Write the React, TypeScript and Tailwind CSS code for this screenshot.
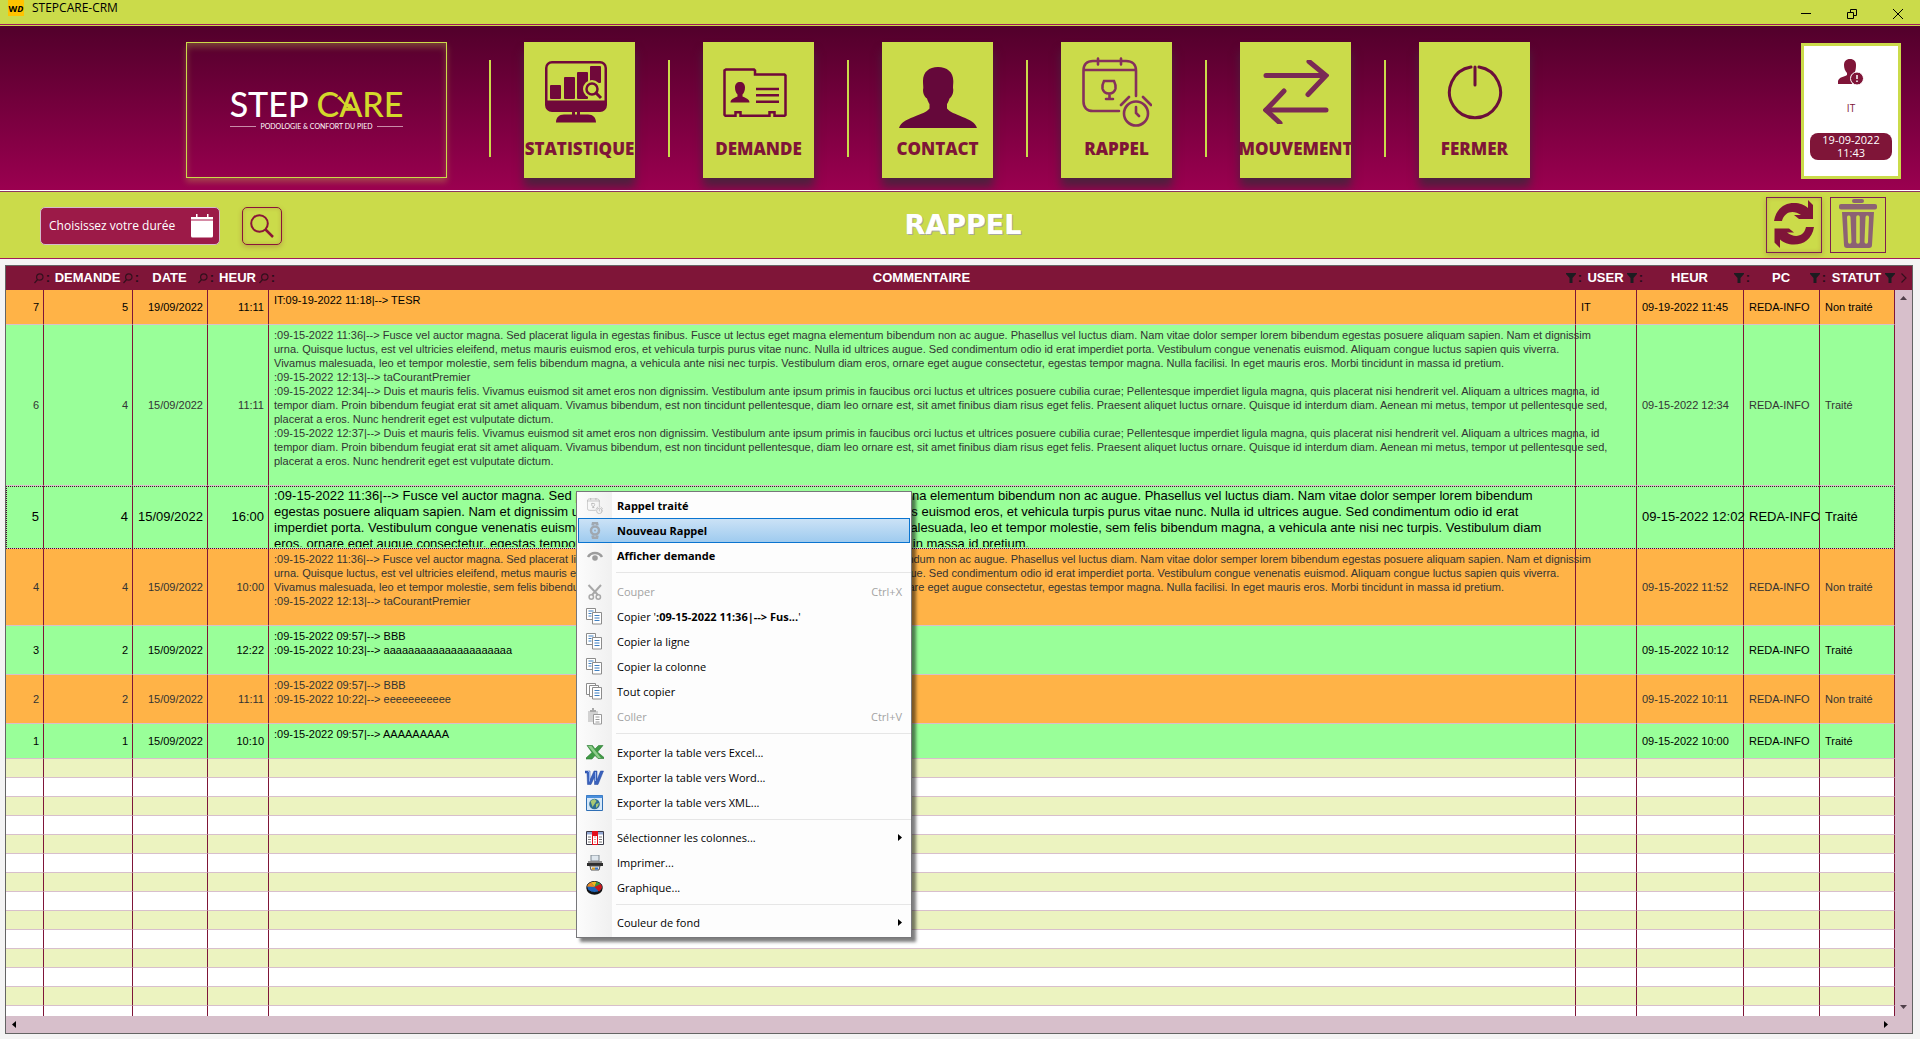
import type { ReactNode } from "react";

/* ---------- header icons ---------- */

const StatIcon = () => (
  <svg width="70" height="62" viewBox="0 0 70 62" fill="#70093a">
    <path fillRule="evenodd" d="M7 0h48a7 7 0 0 1 7 7v37a7 7 0 0 1-7 7H7a7 7 0 0 1-7-7V7a7 7 0 0 1 7-7zm0 2.500a4.500 4.500 0 0 0-4.500 4.500v32.500h57V7a4.500 4.500 0 0 0-4.500-4.500z" />
    <rect x="5" y="24" width="11" height="14" rx="1" />
    <rect x="19" y="16" width="11" height="22" rx="1" />
    <rect x="32" y="11" width="11" height="27" rx="1" />
    <rect x="45" y="5" width="11" height="17" rx="1" />
    <circle cx="47" cy="28" r="9" fill="#cbdb4a" />
    <circle cx="47" cy="28" r="5.500" fill="none" stroke="#70093a" strokeWidth="2.500" />
    <path d="M51 32l5 5" stroke="#70093a" strokeWidth="3" />
    <path d="M27 51h3v4h-3zM32 51h3v4h-3zM11 61.500c0-5 3-8 8-8h24c5 0 8 3 8 8z" />
  </svg>
);

const DemandeIcon = () => (
  <svg width="72" height="49" viewBox="0 0 72 49" fill="none" stroke="#70093a" strokeWidth="2.500">
    <path d="M3 1.500h28l1 1v4h29.500l1 1V47l-1 .8H51.500v-3.500h-5v3.500h-29v-3.500h-5v3.500H2.500l-1-1V2.500z" />
    <path d="M33 21h23M33 27.300h23M33 33.700h23" />
    <path d="M17 14c-3 0-5 2-5 5.500 0 3 1 5.500 2.500 7v2c-3 1.500-7 2.500-7 6h19c0-3.500-4-4.500-7-6v-2c1.500-1.500 2.500-4 2.500-7 0-3.500-2-5.500-5-5.500z" fill="#70093a" stroke="none" />
  </svg>
);

const ContactIcon = () => (
  <svg width="78" height="72" viewBox="0 -11 78 72" fill="#65083a">
    <path d="M39 0c-9 0-15 5-15 14 0 3 .3 4 .3 7-1 4 1 9 3.700 10.500 1 3 1.500 4 2.500 5.500v4.500c-3 4-8 5-16 8.500C7 53 2 55 0 61h78c-2-6-7-8-14.500-11C56 46.500 51 45.500 48 41.500V37c1-1.500 1.500-2.500 2.500-5.500C53 30 55 25 54 21c0-3 .3-4 .3-7C54.300 5 48 0 39 0z" />
  </svg>
);

const RappelIcon = ({ size, color }: { size: number; color: string }) => (
  <svg width={size} height={size} viewBox="0 0 70 70" fill="none" stroke={color} strokeWidth="2.600" strokeLinecap="round">
    <path d="M37 54H11c-6 0-9.500-3.500-9.500-9.500V13.500C1.500 7.500 5 4 11 4h33c6 0 10 3.500 10 9.500V39M2 13h52M16 1.500v6M39 1.500v6" />
    <path d="M22 24h10c1.500 3 2 5 1.500 7.500-.8 3.500-3 5-6.500 5s-5.700-1.500-6.500-5c-.5-2.500 0-4.500 1.500-7.500zM27.500 37v5M24 42h7" />
    <circle cx="54" cy="56.500" r="12" />
    <path d="M54 50v6l3 3M39 48l8-8M61 40l8 8" />
  </svg>
);

const MouvementIcon = () => (
  <svg width="66" height="64" viewBox="0 0 66 64" fill="none" stroke="#7a2a55" strokeWidth="5" strokeLinecap="round">
    <path d="M3 15.500h59M3 50h60" />
    <path d="M46 1.500l17 14-18 19M21 31L3 50l14 13" />
  </svg>
);

const FermerIcon = () => (
  <svg width="56" height="56" viewBox="0 0 56 56" fill="none" stroke="#6b0f3a" strokeWidth="3" strokeLinecap="round">
    <path d="M32 3a25.500 25.500 0 1 1-8 0M28 3v18" />
  </svg>
);

const UserAlertIcon = () => (
  <svg width="26" height="26" viewBox="0 0 26 26" fill="#7f1538">
    <path d="M12 0c-4 0-6 2.500-6 6 0 3 1 6 3 8v2c-3 2-8 2-9 6v3h14l2-10c1-2 2-4 2-9 0-3.500-2-6-6-6z" />
    <circle cx="19" cy="19.500" r="6.500" stroke="#fff" />
    <path d="M19 16v4M19 21.500V23" stroke="#fff" strokeWidth="1.500" />
  </svg>
);

/* ---------- toolbar icons ---------- */

const CalendarIcon = () => (
  <svg width="22" height="24" viewBox="0 0 22 24" fill="#fff">
    <path d="M0 3h22v2.500H0zM0 7h22v15a1.500 1.500 0 0 1-1.500 1.500h-19A1.500 1.500 0 0 1 0 22z" />
    <path d="M5 0h1.500v4H5zM16 0h1.500v4H16z" />
    <path d="M0 5.500h22V7H0z" fill="#d58aa5" />
  </svg>
);

const SearchIcon = () => (
  <svg width="24" height="24" viewBox="0 0 24 24" fill="none" stroke="#8a1538" strokeWidth="2">
    <circle cx="9.500" cy="9.500" r="8.300" />
    <path d="M15.500 15.500l7.500 7.500" strokeWidth="2.500" />
  </svg>
);

const RefreshIcon = () => (
  <svg width="40" height="48" viewBox="0 0 40 48" fill="#7f1538">
    <path d="M0 21C2 9 10 3 20 3c6 0 10 1.500 14 5V0l5 5v14H25l-5-4h7c-8-6-17-3-19 6z" />
    <path d="M40 27c-2 12-10 17.500-20 17.500-6 0-10-1.500-14-5V48l-5.500-5.500V28.500H15l5 4h-7c8 6 17 4 19-5.500z" />
  </svg>
);

const TrashIcon = () => (
  <svg width="38" height="49" viewBox="0 0 38 49" fill="#8c6274">
    <rect x="13" y="0" width="12" height="4" rx="2" />
    <rect x="0" y="5" width="38" height="5.500" rx="2" />
    <path fillRule="evenodd" d="M3 13h32l-2 33a3 3 0 0 1-3 3H8a3 3 0 0 1-3-3zM8 18l1 25a1.500 1.500 0 0 0 3.500 0L11.500 18a1.800 1.800 0 0 0-3.500 0zM17.200 18v25a1.800 1.800 0 0 0 3.600 0V18a1.800 1.800 0 0 0-3.600 0zM26.500 18l-1 25a1.500 1.500 0 0 0 3.500 0l1-25a1.800 1.800 0 0 0-3.500 0z" />
  </svg>
);

/* ---------- table header icons ---------- */

const Loupe = () => (
  <svg width="10" height="11" viewBox="0 0 10 11" fill="none" stroke="#33101d" strokeWidth="1.200">
    <circle cx="5.800" cy="4" r="3.200" />
    <path d="M3.600 6.500L.5 10" />
  </svg>
);

const Funnel = () => (
  <svg width="10" height="10" viewBox="0 0 10 10" fill="#1c1c20">
    <path d="M0 0h10v1L6.500 5v5h-3V5L0 1z" />
  </svg>
);

/* ---------- context menu icons ---------- */

const WatchIcon = () => (
  <svg width="12" height="17" viewBox="0 0 12 17" fill="none" stroke="#a0a8b0" strokeWidth="2.500">
    <circle cx="6" cy="8.500" r="4" />
    <path d="M3.500 3.500L4 1.200h4l.5 2.300M3.500 13.500l.5 2.300h4l.5-2.300" />
    <circle cx="6" cy="8.500" r="1" fill="#a0a8b0" stroke="none" />
  </svg>
);
const EyeIcon = () => (
  <svg width="16" height="10" viewBox="0 0 16 10" fill="none" stroke="#9c9c9c">
    <path d="M1 6c3-5.500 11-5.500 14 0" strokeWidth="2.500" />
    <circle cx="8" cy="7" r="2.800" fill="#9c9c9c" stroke="none" />
  </svg>
);
const CutIcon = () => (
  <svg width="16" height="16" viewBox="0 0 16 16" fill="none" stroke="#a8a8a8" strokeWidth="1.500">
    <path d="M1.500 1L11 11M14 1L5 11" strokeWidth="2" />
    <circle cx="4.300" cy="13" r="2.200" />
    <circle cx="11.300" cy="13" r="2.200" />
  </svg>
);
const CopyIcon = () => (
  <svg width="17" height="17" viewBox="0 0 17 17" fill="#fff" stroke="#8c8c8c">
    <path d="M.5.500h9v11h-9z" />
    <path d="M2.500 3h5M2.500 5.500h3M2.500 8h3" stroke="#3f7fc0" />
    <path d="M6.500 4.500h9v11.500h-9z" />
    <path d="M8.500 7.500h5M8.500 10h5M8.500 12.500h5" stroke="#3f7fc0" />
  </svg>
);
const CopyAllIcon = () => (
  <svg width="17" height="17" viewBox="0 0 17 17" fill="#fff" stroke="#8c8c8c">
    <path d="M.5.500h9v11h-9z" />
    <path d="M3.500 2.500h9v11h-9z" />
    <path d="M6.500 4.500h9v11.500h-9z" />
    <path d="M8.500 7.500h5M8.500 10h5M8.500 12.500h5" stroke="#3f7fc0" />
  </svg>
);
const PasteIcon = () => (
  <svg width="16" height="17" viewBox="0 0 16 17">
    <path d="M1 3h10v11H1z" fill="#d2d2d2" />
    <path d="M3 2h2V0h2v2h2v2H3z" fill="#a9a9a9" />
    <path d="M6.500 6.500h8v9.500h-8z" fill="#fff" stroke="#999" />
    <path d="M8.500 9h4M8.500 11.500h4M8.500 14h4" stroke="#999" />
  </svg>
);
const ExcelIcon = () => (
  <svg width="18" height="15" viewBox="0 0 18 15">
    <path d="M1 .5h5.500L9 4l3.500-3.500H17L11.500 7l6.500 5.500v1h-6L9 10.500l-3 3.500H0v-1l6-5.500z" fill="#3f9a45" stroke="#2c7a33" strokeWidth=".6" />
    <path d="M2 1h3.500L15 13h-3z" fill="#8fce8b" />
  </svg>
);
const WordIcon = () => (
  <svg width="19" height="15" viewBox="0 0 19 15">
    <path d="M0 1h5v9l4-9h3v9l3.500-9H18.500L13 14.500H9.500V7L6 14.500H2.500L2 3H0z" fill="#3a62bd" stroke="#23479c" strokeWidth=".5" />
    <path d="M3 1.500h1.500v10M10.500 2v9" stroke="#93b2ec" fill="none" />
  </svg>
);
const XmlIcon = () => (
  <svg width="17" height="16" viewBox="0 0 17 16">
    <path d="M.5.500h16v15H.5z" fill="#d6e8f8" stroke="#2f6fb5" />
    <path d="M.5.500h16V3H.5z" fill="#4a8fdc" />
    <circle cx="8.500" cy="9" r="5.300" fill="#2f6f94" />
    <path d="M4.500 6l4-2 2 2-2 3-2 3zM10 9l3-1-1 3-2 2z" fill="#a9c973" />
  </svg>
);
const ColumnsIcon = () => (
  <svg width="18" height="14" viewBox="0 0 18 14">
    <path d="M.5.500h17v13H.5z" fill="#fff" stroke="#3b3b48" />
    <path d="M1 1h16v2.500H1z" fill="#90a5d0" />
    <path d="M6 0h6v14H6z" fill="#e30f1c" />
    <path d="M7 5h4v8H7z" fill="#fff" />
    <path d="M2 6h3M2 8.500h3M2 11h3M13 6h3M13 8.500h3M13 11h3" stroke="#777" />
    <path d="M8 6h2M8 8.500h2M8 11h2" stroke="#e38a8a" />
  </svg>
);
const PrintIcon = () => (
  <svg width="16" height="16" viewBox="0 0 16 16">
    <path d="M4 0h8v6H4z" fill="#dfe7ee" stroke="#7d8790" />
    <path d="M1 6h14v3H1z" fill="#8c8c8c" />
    <path d="M0 8h16v3H0z" fill="#2e2e2e" />
    <path d="M3 11h10l-1 4H4z" fill="#e9eef2" stroke="#555" />
    <path d="M5 12.500h3v2H5z" fill="#e0a020" />
    <path d="M8 12.500h3v2H8z" fill="#3b78c4" />
  </svg>
);
const PieIcon = () => (
  <svg width="17" height="14" viewBox="0 0 17 14">
    <ellipse cx="8.500" cy="7.800" rx="8" ry="6" fill="#111" />
    <ellipse cx="8.500" cy="6" rx="7.700" ry="5.500" fill="#1f63b8" stroke="#111" />
    <path d="M8.500 6L5 1.300Q8 .3 10.500.900z" fill="#f0b91b" />
    <path d="M8.500 6L1 5.500Q2 2.500 5 1.300z" fill="#f08a1b" />
    <path d="M8.500 6l2-5.100Q13 1.200 14.500 3z" fill="#3c9a35" />
    <path d="M8.500 6l6-3Q18 6.500 13 10.400z" fill="#cf1717" />
  </svg>
);

/* ---------- data ---------- */

const nav: { label: string; icon: ReactNode }[] = [
  { label: "STATISTIQUE", icon: <StatIcon /> },
  { label: "DEMANDE", icon: <DemandeIcon /> },
  { label: "CONTACT", icon: <ContactIcon /> },
  { label: "RAPPEL", icon: <RappelIcon size={70} color="#85305c" /> },
  { label: "MOUVEMENT", icon: <MouvementIcon /> },
  { label: "FERMER", icon: <FermerIcon /> },
];

const fusce = [
  ":09-15-2022 11:36|--> Fusce vel auctor magna. Sed placerat ligula in egestas finibus. Fusce ut lectus eget magna elementum bibendum non ac augue. Phasellus vel luctus diam. Nam vitae dolor semper lorem bibendum egestas posuere aliquam sapien. Nam et dignissim",
  "urna. Quisque luctus, est vel ultricies eleifend, metus mauris euismod eros, et vehicula turpis purus vitae nunc. Nulla id ultrices augue. Sed condimentum odio id erat imperdiet porta. Vestibulum congue venenatis euismod. Aliquam congue luctus sapien quis viverra.",
  "Vivamus malesuada, leo et tempor molestie, sem felis bibendum magna, a vehicula ante nisi nec turpis. Vestibulum diam eros, ornare eget augue consectetur, egestas tempor magna. Nulla facilisi. In eget mauris eros. Morbi tincidunt in massa id pretium.",
  ":09-15-2022 12:13|--> taCourantPremier",
];

const duis = (time: string) => [
  `:09-15-2022 ${time}|--> Duis et mauris felis. Vivamus euismod sit amet eros non dignissim. Vestibulum ante ipsum primis in faucibus orci luctus et ultrices posuere cubilia curae; Pellentesque imperdiet ligula magna, quis placerat nisi hendrerit vel. Aliquam a ultrices magna, id`,
  "tempor diam. Proin bibendum feugiat erat sit amet aliquam. Vivamus bibendum, est non tincidunt pellentesque, diam leo ornare est, sit amet finibus diam risus eget felis. Praesent aliquet luctus ornare. Quisque id interdum diam. Aenean mi metus, tempor ut pellentesque sed,",
  "placerat a eros. Nunc hendrerit eget est vulputate dictum.",
];

type Row = {
  id: number;
  demande: number;
  date: string;
  heur: string;
  lines: string[];
  user: string;
  stamp: string;
  done: boolean;
  height: string;
  selected?: boolean;
};

const rows: Row[] = [
  { id: 7, demande: 5, date: "19/09/2022", heur: "11:11", lines: ["IT:09-19-2022 11:18|--> TESR"], user: "IT", stamp: "09-19-2022 11:45", done: false, height: "h-[35px]" },
  { id: 6, demande: 4, date: "15/09/2022", heur: "11:11", lines: [...fusce, ...duis("12:34"), ...duis("12:37")], user: "", stamp: "09-15-2022 12:34", done: true, height: "h-[161px]" },
  {
    id: 5, demande: 4, date: "15/09/2022", heur: "16:00",
    lines: [
      ":09-15-2022 11:36|--> Fusce vel auctor magna. Sed placerat ligula in egestas finibus. Fusce ut lectus eget magna elementum bibendum non ac augue. Phasellus vel luctus diam. Nam vitae dolor semper lorem bibendum",
      "egestas posuere aliquam sapien. Nam et dignissim urna. Quisque luctus, est vel ultricies eleifend, metus mauris euismod eros, et vehicula turpis purus vitae nunc. Nulla id ultrices augue. Sed condimentum odio id erat",
      "imperdiet porta. Vestibulum congue venenatis euismod. Aliquam congue luctus sapien quis viverra. Vivamus malesuada, leo et tempor molestie, sem felis bibendum magna, a vehicula ante nisi nec turpis. Vestibulum diam",
      "eros, ornare eget augue consectetur, egestas tempor magna. Nulla facilisi. In eget mauris eros. Morbi tincidunt in massa id pretium.",
    ],
    user: "", stamp: "09-15-2022 12:02", done: true, height: "h-[63px]", selected: true,
  },
  { id: 4, demande: 4, date: "15/09/2022", heur: "10:00", lines: fusce, user: "", stamp: "09-15-2022 11:52", done: false, height: "h-[77px]" },
  { id: 3, demande: 2, date: "15/09/2022", heur: "12:22", lines: [":09-15-2022 09:57|--> BBB", ":09-15-2022 10:23|--> aaaaaaaaaaaaaaaaaaaaa"], user: "", stamp: "09-15-2022 10:12", done: true, height: "h-[49px]" },
  { id: 2, demande: 2, date: "15/09/2022", heur: "11:11", lines: [":09-15-2022 09:57|--> BBB", ":09-15-2022 10:22|--> eeeeeeeeeee"], user: "", stamp: "09-15-2022 10:11", done: false, height: "h-[49px]" },
  { id: 1, demande: 1, date: "15/09/2022", heur: "10:10", lines: [":09-15-2022 09:57|--> AAAAAAAAA"], user: "", stamp: "09-15-2022 10:00", done: true, height: "h-[35px]" },
];

const columns: { name: string; icon: "loupe" | "funnel" }[] = [
  { name: "", icon: "loupe" },
  { name: "DEMANDE", icon: "loupe" },
  { name: "DATE", icon: "loupe" },
  { name: "HEUR", icon: "loupe" },
  { name: "COMMENTAIRE", icon: "funnel" },
  { name: "USER", icon: "funnel" },
  { name: "HEUR", icon: "funnel" },
  { name: "PC", icon: "funnel" },
  { name: "STATUT", icon: "funnel" },
];

/* ---------- window parts ---------- */

function TitleBar() {
  return (
    <header className="flex h-[25px] shrink-0 items-start justify-between border-b border-[#a3195b] bg-[#cbdb4a] pl-2">
      <div className="flex items-center gap-2">
        <span className="flex size-4 items-center justify-center bg-[#ffc400] text-[9px] font-bold leading-none text-black">
          W<i>D</i>
        </span>
        <h1 className="text-[12px] leading-4 text-black">STEPCARE-CRM</h1>
      </div>
      <div className="flex">
        <button aria-label="Réduire" className="flex h-6 w-[46px] items-center justify-center pt-1">
          <svg width="10" height="10" viewBox="0 0 10 10"><path d="M0 4h10v1H0z" /></svg>
        </button>
        <button aria-label="Restaurer" className="flex h-6 w-[46px] items-center justify-center pt-1">
          <svg width="10" height="10" viewBox="0 0 10 10" fill="none" stroke="#000"><path d="M.5 3.500h6v6h-6zM3.500 3.500v-3h6v6h-3" /></svg>
        </button>
        <button aria-label="Fermer la fenêtre" className="flex h-6 w-[45px] items-center justify-center pt-1">
          <svg width="10" height="10" viewBox="0 0 10 10" fill="none" stroke="#000"><path d="M0 0l10 10M10 0L0 10" /></svg>
        </button>
      </div>
    </header>
  );
}

function Logo() {
  return (
    <div className="mr-[42px] flex h-[136px] w-[261px] flex-col items-center border border-[#cbdb4a] pt-[45px] shadow-[0_4px_6px_rgba(203,219,74,0.3),inset_0_4px_6px_rgba(203,219,74,0.3)]">
      <div className="relative flex gap-2 font-['Lato'] text-[34px] font-medium leading-8">
        <span className="text-white">STEP</span>
        <span className="text-[#d3d92b]">CARE</span>
        <svg className="absolute left-[107px] top-2" width="20" height="20" viewBox="0 0 20 20" fill="#d3d92b">
          <path d="M0 2l3-2 5 7 6 1 3 5-6-1z" />
        </svg>
      </div>
      <div className="flex items-center gap-1 text-white">
        <span className="h-px w-[26px] bg-[#c98ba8]" />
        <span className="whitespace-nowrap font-['Lato'] text-[7px] leading-3">PODOLOGIE &amp; CONFORT DU PIED</span>
        <span className="h-px w-[26px] bg-[#c98ba8]" />
      </div>
    </div>
  );
}

function Banner() {
  return (
    <section className="mt-px flex h-[164px] shrink-0 items-start bg-linear-to-b from-[#52002b] to-[#9b0050] pl-[186px] pr-[19px] pt-4">
      <Logo />
      <nav className="flex">
        {nav.map(({ label, icon }) => (
          <div key={label} className="flex items-start">
            <span className="mr-[33px] mt-[18px] h-[97px] w-0.5 bg-[#cbdb4a]" />
            <button className="mr-[33px] flex h-[136px] w-[111px] flex-col items-center bg-[#cbdb4a] shadow-[0_9px_9px_rgba(70,35,60,0.9)]">
              <span className="flex h-24 items-center justify-center pt-1">{icon}</span>
              <span className="flex justify-center whitespace-nowrap text-[17px] font-extrabold leading-[22px] text-[#7f1538]">
                {label}
              </span>
            </button>
          </div>
        ))}
      </nav>
      <aside className="ml-auto mt-px flex h-[136px] w-[100px] flex-col items-center border-3 border-[#cbdb4a] bg-white pt-[13px] text-[11px] leading-[13px]">
        <UserAlertIcon />
        <span className="mt-[17px] text-[10px] text-[#7f1538]">IT</span>
        <time className="mt-[18px] w-[82px] rounded-lg bg-[#7f1538] pb-px text-center text-white">
          19-09-2022
          <br />
          11:43
        </time>
      </aside>
    </section>
  );
}

function Toolbar() {
  return (
    <section className="flex h-[69px] shrink-0 flex-col border-b border-t border-[#a3195b] border-t-white bg-[#cbdb4a]">
      <div className="grid grow grid-cols-[1fr_auto_1fr] items-center border-t border-[#8d3560] pl-10 pr-[34px]">
        <div className="flex items-center gap-[22px] pt-0.5">
          <button className="flex h-[38px] w-[180px] items-center justify-between rounded-[5px] border border-[#d5bccb] bg-[#9c1a48] pl-2 pr-1.5 text-[12px] text-white">
            Choisissez votre durée
            <CalendarIcon />
          </button>
          <button aria-label="Rechercher" className="flex h-[38px] w-10 items-center justify-center rounded-[5px] border border-[#8a1538] shadow-[0_2px_5px_rgba(127,21,56,0.25),inset_0_0_4px_rgba(127,21,56,0.2)]">
            <SearchIcon />
          </button>
        </div>
        <h2 className="text-center font-['DejaVu_Sans'] text-[27px] font-bold leading-8 text-white [text-shadow:1px_1px_0_#a9a9a0]">RAPPEL</h2>
        <div className="flex justify-end gap-2">
          <button aria-label="Actualiser" className="flex size-14 items-start justify-center border border-[#7f1f50] pt-0.5 shadow-[0_2px_5px_rgba(127,21,56,0.25),inset_0_0_4px_rgba(127,21,56,0.2)]">
            <RefreshIcon />
          </button>
          <button aria-label="Supprimer" className="flex size-14 items-start justify-center border border-[#7f1f50] pt-px">
            <TrashIcon />
          </button>
        </div>
      </div>
    </section>
  );
}

function DataRow({ row }: { row: Row }) {
  const bg = row.done ? "bg-[#99ff99]" : "bg-[#ffb347]";
  const size = row.selected ? "text-[13px] leading-4" : "text-[11px] leading-[14px]";
  const ink = row.id % 2 === 0 ? "text-[#333333]" : "text-black";
  const cell = "whitespace-nowrap border-b border-r border-b-[#d8bfcc] border-r-[#7f1538] p-0";
  const num = `${cell} pr-1 text-right`;
  const txt = `${cell} pl-[5px] text-left`;
  return (
    <tr className={`${row.height} ${bg} ${size} ${ink} ${row.selected ? "outline-1 -outline-offset-1 outline-dotted outline-[#4a0030]" : ""}`}>
      <td className={num}>{row.id}</td>
      <td className={num}>{row.demande}</td>
      <td className={num}>{row.date}</td>
      <td className={num}>{row.heur}</td>
      <td className={`${txt} align-top`}>
        <div className={row.selected ? "h-[61px] overflow-hidden pt-0.5" : "pt-[3px]"}>
          {row.lines.map((l, i) => (
            <p key={i}>{l}</p>
          ))}
        </div>
      </td>
      <td className={txt}>{row.user}</td>
      <td className={txt}>{row.stamp}</td>
      <td className={`${txt} overflow-hidden`}>REDA-INFO</td>
      <td className={txt}>{row.done ? "Traité" : "Non traité"}</td>
    </tr>
  );
}

function Grid() {
  return (
    <main className="mb-[5px] ml-[5px] mr-[7px] mt-1.5 flex min-h-0 grow flex-col border border-[#646464] bg-[#d7bfcb] font-['Liberation_Sans',Arial,sans-serif]">
      <div className="flex min-h-0 grow">
        <div className="min-w-0 grow overflow-hidden bg-white">
          <table className="w-full table-fixed border-separate border-spacing-0">
            <colgroup>
              <col className="w-[38px]" />
              <col className="w-[89px]" />
              <col className="w-[75px]" />
              <col className="w-[61px]" />
              <col />
              <col className="w-[61px]" />
              <col className="w-[107px]" />
              <col className="w-[76px]" />
              <col className="w-[75px]" />
            </colgroup>
            <thead>
              <tr className="h-6 bg-[#7f1538] text-[13px] font-bold leading-4 text-white">
                {columns.map((c, i) => (
                  <th key={i} className="p-0">
                    <div className="flex items-center justify-between">
                      <span className="w-2 text-[#2a0c18]">{i > 0 ? ":" : ""}</span>
                      <span>{c.name}</span>
                      <button aria-label={c.icon === "loupe" ? "Rechercher" : "Filtrer"}>
                        {c.icon === "loupe" ? <Loupe /> : <Funnel />}
                      </button>
                    </div>
                  </th>
                ))}
              </tr>
            </thead>
            <tbody>
              {rows.map((r) => (
                <DataRow key={r.id} row={r} />
              ))}
              {Array.from({ length: 14 }, (_, i) => (
                <tr key={i} className={`h-[19px] ${i % 2 === 0 ? "bg-[#ecf3c0]" : "bg-white"}`}>
                  {columns.map((_c, j) => (
                    <td key={j} className="border-b border-r border-b-[#d8bfcc] border-r-[#7f1538] p-0" />
                  ))}
                </tr>
              ))}
            </tbody>
          </table>
        </div>
        <div className="flex w-[17px] shrink-0 flex-col items-center">
          <button aria-label="Colonnes suivantes" className="flex h-6 w-full items-center justify-center bg-[#7f1538]">
            <svg width="6" height="10" viewBox="0 0 6 10" fill="none" stroke="#33101d" strokeWidth="1.200"><path d="M.5.500l4.500 4.500L.5 9.500" /></svg>
          </button>
          <button aria-label="Défiler vers le haut" className="mt-1.5">
            <svg width="7" height="4" viewBox="0 0 7 4" fill="#50404a"><path d="M0 4L3.500 0 7 4z" /></svg>
          </button>
          <button aria-label="Défiler vers le bas" className="mb-[7px] mt-auto">
            <svg width="7" height="4" viewBox="0 0 7 4" fill="#50404a"><path d="M0 0l3.500 4L7 0z" /></svg>
          </button>
        </div>
      </div>
      <div className="flex h-[17px] shrink-0 items-center justify-between pl-1.5 pr-6">
        <button aria-label="Défiler à gauche">
          <svg width="4" height="7" viewBox="0 0 4 7"><path d="M4 0L0 3.500 4 7z" /></svg>
        </button>
        <button aria-label="Défiler à droite">
          <svg width="4" height="7" viewBox="0 0 4 7"><path d="M0 0l4 3.500L0 7z" /></svg>
        </button>
      </div>
    </main>
  );
}

/* ---------- context menu ---------- */

type ItemProps = {
  icon?: ReactNode;
  children: ReactNode;
  bold?: boolean;
  disabled?: boolean;
  active?: boolean;
  shortcut?: string;
  submenu?: boolean;
};

function Item({ icon, children, bold, disabled, active, shortcut, submenu }: ItemProps) {
  return (
    <button
      role="menuitem"
      disabled={disabled}
      className={`mx-px flex h-[25px] items-center border pr-[7px] text-left ${
        active ? "border-[#0a74d0] bg-linear-to-b from-[#cbe2f6] to-[#9fcbef]" : "border-transparent"
      } ${bold ? "font-bold" : ""} ${disabled ? "text-[#a3a3a3]" : "text-black"}`}
    >
      <span className="flex w-[31px] justify-center">{icon}</span>
      <span className="grow pl-[7px]">{children}</span>
      {shortcut && <span>{shortcut}</span>}
      {submenu && (
        <svg width="4" height="7" viewBox="0 0 4 7"><path d="M0 0l4 3.500L0 7z" /></svg>
      )}
    </button>
  );
}

const Separator = ({ loose }: { loose?: boolean }) => (
  <hr className={`ml-[39px] mt-1 border-t border-[#e6e6e6] ${loose ? "mb-1.5" : "mb-[5px]"}`} />
);

function ContextMenu() {
  return (
    <div
      role="menu"
      className="absolute left-[576px] top-[491px] flex w-[336px] flex-col border border-[#77777a] bg-[#fdfdfd] bg-[linear-gradient(to_right,#fcfcfc,#f0f0f0)] bg-[length:35px_100%] bg-no-repeat pb-0.5 pt-px text-[11px] leading-4 shadow-[4px_4px_3px_rgba(0,0,0,0.5)]"
    >
      <Item bold icon={<RappelIcon size={16} color="#a8a8a8" />}>Rappel traité</Item>
      <Item bold active icon={<WatchIcon />}>Nouveau Rappel</Item>
      <Item bold icon={<EyeIcon />}>Afficher demande</Item>
      <Separator loose />
      <Item disabled shortcut="Ctrl+X" icon={<CutIcon />}>Couper</Item>
      <Item icon={<CopyIcon />}>
        Copier '<b>:09-15-2022 11:36|--&gt; Fus...</b>'
      </Item>
      <Item icon={<CopyIcon />}>Copier la ligne</Item>
      <Item icon={<CopyIcon />}>Copier la colonne</Item>
      <Item icon={<CopyAllIcon />}>Tout copier</Item>
      <Item disabled shortcut="Ctrl+V" icon={<PasteIcon />}>Coller</Item>
      <Separator loose />
      <Item icon={<ExcelIcon />}>Exporter la table vers Excel...</Item>
      <Item icon={<WordIcon />}>Exporter la table vers Word...</Item>
      <Item icon={<XmlIcon />}>Exporter la table vers XML...</Item>
      <Separator />
      <Item submenu icon={<ColumnsIcon />}>Sélectionner les colonnes...</Item>
      <Item icon={<PrintIcon />}>Imprimer...</Item>
      <Item icon={<PieIcon />}>Graphique...</Item>
      <Separator />
      <Item submenu>Couleur de fond</Item>
    </div>
  );
}

export default function App() {
  return (
    <div className="relative flex h-screen flex-col overflow-hidden bg-[#f4f4f4] font-['Open_Sans','Noto_Sans',sans-serif]">
      <div className="flex shrink-0 flex-col bg-[#cbdb4a]">
        <TitleBar />
        <Banner />
      </div>
      <Toolbar />
      <Grid />
      <ContextMenu />
    </div>
  );
}
